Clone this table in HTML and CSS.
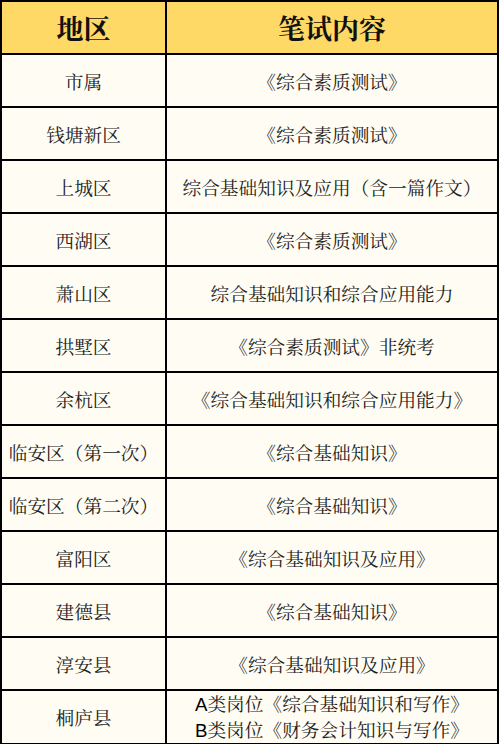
FILE: index.html
```html
<!DOCTYPE html>
<html lang="zh">
<head>
<meta charset="utf-8">
<link rel="stylesheet" href="styles.css">
</head>
<body>
<table class="exam">
  <colgroup><col class="c1"><col class="c2"></colgroup>
  <thead>
    <tr><th>地区</th><th>笔试内容</th></tr>
  </thead>
  <tbody>
    <tr><td>市属</td><td>《综合素质测试》</td></tr>
    <tr><td>钱塘新区</td><td>《综合素质测试》</td></tr>
    <tr><td>上城区</td><td>综合基础知识及应用（含一篇作文）</td></tr>
    <tr><td>西湖区</td><td>《综合素质测试》</td></tr>
    <tr><td>萧山区</td><td>综合基础知识和综合应用能力</td></tr>
    <tr><td>拱墅区</td><td>《综合素质测试》非统考</td></tr>
    <tr><td>余杭区</td><td>《综合基础知识和综合应用能力》</td></tr>
    <tr><td>临安区（第一次）</td><td>《综合基础知识》</td></tr>
    <tr><td>临安区（第二次）</td><td>《综合基础知识》</td></tr>
    <tr><td>富阳区</td><td>《综合基础知识及应用》</td></tr>
    <tr><td>建德县</td><td>《综合基础知识》</td></tr>
    <tr><td>淳安县</td><td>《综合基础知识及应用》</td></tr>
    <tr class="last"><td>桐庐县</td><td class="two"><span class="lt">A</span>类岗位《综合基础知识和写作》<br><span class="lt">B</span>类岗位《财务会计知识与写作》</td></tr>
  </tbody>
</table>
</body>
</html>
```
FILE: styles.css
```css
html, body {
  margin: 0;
  padding: 0;
  background: #fffdf3;
}
.exam {
  width: 499px;
  border-collapse: collapse;
  table-layout: fixed;
  font-family: "Noto Serif CJK SC", "Noto Sans CJK SC", serif;
  color: #222;
}
.c1 { width: 165px; }
.exam th, .exam td {
  border: 2px solid #000;
  text-align: center;
  vertical-align: middle;
  padding: 0;
}
.exam th {
  background: #ffd966;
  height: 51px;
  font-size: 27px;
  font-weight: bold;
  color: #111;
}
.exam td {
  background: #fffdf3;
  height: 51px;
  font-size: 18.7px;
  line-height: 24px;
}
.lt {
  font-family: "Liberation Sans", Arial, sans-serif;
  color: #000;
}
```
